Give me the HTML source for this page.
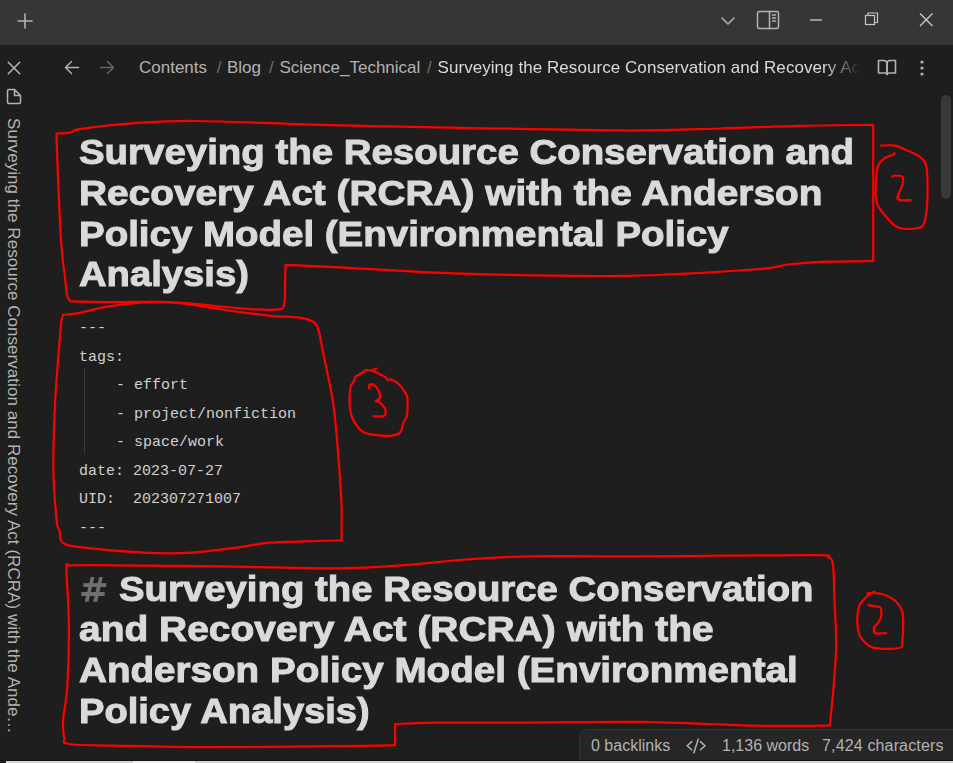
<!DOCTYPE html>
<html><head><meta charset="utf-8">
<style>
html,body{margin:0;padding:0;}
body{width:953px;height:763px;overflow:hidden;position:relative;background:#1e1e1e;font-family:"Liberation Sans",sans-serif;}
.a{position:absolute;}
.t{position:absolute;white-space:pre;transform-origin:0 0;}
.ttl{font-weight:bold;font-size:35.5px;color:#dadada;line-height:40px;-webkit-text-stroke:1px #dadada;}
.fm{font-family:"Liberation Mono",monospace;font-size:15px;color:#d0d0d0;line-height:20px;}
.crumb{font-size:17px;color:#b3b3b3;line-height:20px;}
.sb{font-size:16px;color:#b3b3b3;line-height:20px;}
svg{position:absolute;left:0;top:0;overflow:visible;}
</style></head><body>
<div class="a" style="left:0;top:0;width:953px;height:45px;background:#363636"></div>
<div class="a" style="left:0;top:45px;width:953px;height:1px;background:#1b1b1b"></div>

<svg width="953" height="763" fill="none" stroke-linecap="round" stroke-linejoin="round">
  <path d="M25 14 V28 M18 21 H32" stroke="#b3b3b3" stroke-width="1.6"/>
  <path d="M722 18 L728 24 L734 18" stroke="#b3b3b3" stroke-width="1.5"/>
  <g stroke="#b3b3b3" stroke-width="1.5">
    <rect x="757.5" y="11.5" width="21" height="17" rx="2"/>
    <path d="M769.5 11.5 V28.5 M772.5 15 H775.5 M772.5 18 H775.5 M772.5 21 H775.5"/>
  </g>
  <path d="M810 20 H822" stroke="#c8c8c8" stroke-width="1.3" stroke-linecap="butt"/>
  <g stroke="#c8c8c8" stroke-width="1.2" stroke-linecap="butt" stroke-linejoin="miter">
    <rect x="865.5" y="15.5" width="9" height="9"/>
    <path d="M868 15.5 V13 H877.5 V22.5 H874.5"/>
  </g>
  <path d="M920 13.5 L932.5 26 M932.5 13.5 L920 26" stroke="#c8c8c8" stroke-width="1.4" stroke-linecap="butt"/>
  <path d="M8.3 62.3 L19.7 73.7 M19.7 62.3 L8.3 73.7" stroke="#b3b3b3" stroke-width="1.6"/>
  <path d="M14.5 89.5 H9 a1.5 1.5 0 0 0 -1.5 1.5 V102 a1.5 1.5 0 0 0 1.5 1.5 H19 a1.5 1.5 0 0 0 1.5 -1.5 V95.5 Z M14.5 89.5 V95.5 H20.5" stroke="#b3b3b3" stroke-width="1.5"/>
  <path d="M78.5 67.5 H65.5 M71.5 61.5 L65.5 67.5 L71.5 73.5" stroke="#b3b3b3" stroke-width="1.5"/>
  <path d="M100.5 67.5 H113.5 M107.5 61.5 L113.5 67.5 L107.5 73.5" stroke="#666666" stroke-width="1.5"/>
  <g stroke="#b3b3b3" stroke-width="1.6">
    <path d="M878.5 60.5 H884 a3 3 0 0 1 3 3 V74.5 a2 2 0 0 0 -2 -1.5 H878.5 Z"/>
    <path d="M895.5 60.5 H890 a3 3 0 0 0 -3 3 V74.5 a2 2 0 0 1 2 -1.5 H895.5 Z"/>
  </g>
  <g fill="#b3b3b3">
    <circle cx="922" cy="62" r="1.6"/><circle cx="922" cy="68" r="1.6"/><circle cx="922" cy="74" r="1.6"/>
  </g>
</svg>

<div class="a" style="left:941px;top:95px;width:10px;height:104px;border-radius:5px;background:#393939"></div>

<div class="t crumb" style="left:23px;top:117.5px;transform:rotate(90deg);letter-spacing:0.045px">Surveying the Resource Conservation and Recovery Act (RCRA) with the Ande…</div>

<div class="t crumb" style="left:139px;top:58px;">Contents</div>
<div class="t crumb" style="left:216.7px;top:58px;color:#6e6e6e">/</div>
<div class="t crumb" style="left:227px;top:58px;">Blog</div>
<div class="t crumb" style="left:269px;top:58px;color:#6e6e6e">/</div>
<div class="t crumb" style="left:279.5px;top:58px;">Science_Technical</div>
<div class="t crumb" style="left:427px;top:58px;color:#6e6e6e">/</div>
<div class="t crumb" style="left:437.5px;top:58px;color:#dadada;letter-spacing:0.06px;width:422px;overflow:hidden;-webkit-mask-image:linear-gradient(to right,#000 385px,transparent 422px)">Surveying the Resource Conservation and Recovery Ac</div>

<div class="t ttl" style="left:79px;top:132.3px;transform:scaleX(1.0821)">Surveying the Resource Conservation and</div>
<div class="t ttl" style="left:79px;top:172.9px;transform:scaleX(1.0935)">Recovery Act (RCRA) with the Anderson</div>
<div class="t ttl" style="left:79px;top:213.5px;transform:scaleX(1.0835)">Policy Model (Environmental Policy</div>
<div class="t ttl" style="left:79px;top:254.1px;transform:scaleX(1.0769)">Analysis)</div>

<div class="t fm" style="left:79px;top:318.9px;">---</div>
<div class="t fm" style="left:79px;top:347.5px;">tags:</div>
<div class="a" style="left:84px;top:368px;width:1px;height:86px;background:#3a3a3a"></div>
<div class="t fm" style="left:116px;top:376px;">- effort</div>
<div class="t fm" style="left:116px;top:404.5px;">- project/nonfiction</div>
<div class="t fm" style="left:116px;top:433.1px;">- space/work</div>
<div class="t fm" style="left:79px;top:461.7px;">date: 2023-07-27</div>
<div class="t fm" style="left:79px;top:490.2px;">UID:  202307271007</div>
<div class="t fm" style="left:79px;top:518.8px;">---</div>

<svg width="953" height="763"><g fill="#707070">
  <polygon points="83.4,583.1 106.2,583.1 106.2,587 83.4,587"/>
  <polygon points="81.3,592 104.6,592 104.6,596 81.3,596"/>
  <polygon points="90.7,577.1 94.4,577.1 88.6,601.7 84.7,601.7"/>
  <polygon points="99.1,577.1 102.8,577.1 97.3,601.7 93.1,601.7"/>
</g></svg>
<div class="t ttl" style="left:119px;top:568.5px;transform:scaleX(1.0799)">Surveying the Resource Conservation</div>
<div class="t ttl" style="left:79px;top:609.2px;transform:scaleX(1.0971)">and Recovery Act (RCRA) with the</div>
<div class="t ttl" style="left:79px;top:650px;transform:scaleX(1.0877)">Anderson Policy Model (Environmental</div>
<div class="t ttl" style="left:79px;top:690.7px;transform:scaleX(1.0729)">Policy Analysis)</div>

<div class="a" style="left:579px;top:729px;width:380px;height:40px;background:#262626;border:1px solid #363636;border-radius:8px 0 0 0;"></div>
<div class="t sb" style="left:591px;top:736px;">0 backlinks</div>
<svg width="953" height="763" fill="none"><path d="M691.7 741.6 L687.2 745.7 L691.7 749.8 M700.5 741.6 L705 745.7 L700.5 749.8 M698.2 739.3 L693.9 752.8" stroke="#b3b3b3" stroke-width="1.5" stroke-linecap="round" stroke-linejoin="round"/></svg>
<div class="t sb" style="left:722px;top:736px;">1,136 words</div>
<div class="t sb" style="left:822px;top:736px;letter-spacing:0.15px">7,424 characters</div>

<div class="a" style="left:0;top:760px;width:953px;height:1px;background:#141414"></div>
<div class="a" style="left:0;top:761px;width:953px;height:2px;background:#1e1e1e"></div>
<div class="a" style="left:6px;top:761px;width:947px;height:2px;background:#d6d6d6"></div>
<div class="a" style="left:133px;top:761px;width:62px;height:2px;background:#efefef"></div>

<svg width="953" height="763" fill="none" stroke="#ff0000" stroke-width="2.2" stroke-linecap="round" stroke-linejoin="round">
<path d="M56.4 133.6 C58.7 133.4 65.9 133.5 70.0 132.7 C74.1 131.9 70.3 130.5 81.0 128.9 C91.7 127.3 115.1 124.5 134.4 123.2 C153.7 121.9 164.4 120.7 197.0 121.0 C229.6 121.3 285.8 124.0 330.0 125.1 C374.2 126.2 412.0 126.9 462.0 127.8 C512.0 128.7 587.0 130.4 630.0 130.5 C673.0 130.6 691.7 129.3 720.0 128.5 C748.3 127.7 774.5 126.4 800.0 125.8 C825.5 125.2 861.0 125.0 873.2 124.8 L873.2 124.8 C873.2 135.7 873.2 167.3 873.2 190.0 C873.2 212.7 873.2 249.2 873.2 261.0 L873.2 261.0 C864.6 261.1 835.7 261.2 821.5 261.8 C807.3 262.4 799.2 263.2 788.0 264.5 C776.8 265.8 781.2 267.6 754.0 269.5 C726.8 271.4 673.7 275.1 625.0 275.8 C576.3 276.5 509.5 275.1 462.0 273.7 C414.5 272.3 369.4 268.9 340.0 267.4 C310.6 265.9 294.6 265.3 285.5 264.9 L285.5 264.9 C285.4 268.4 285.1 280.6 285.0 286.0 C284.9 291.4 285.2 294.2 285.0 297.6 C284.8 301.0 284.5 304.4 283.5 306.4 C282.5 308.4 283.8 308.9 279.1 309.4 C274.5 309.9 264.4 309.8 255.6 309.4 C246.8 309.0 236.1 307.9 226.3 307.0 C216.5 306.1 206.7 304.9 196.9 304.1 C187.1 303.3 182.2 302.4 167.5 302.0 C152.8 301.6 124.4 302.1 108.8 302.0 C93.2 301.9 80.5 301.7 74.0 301.4 C67.5 301.1 70.6 300.8 69.5 300.0 C68.4 299.2 68.0 298.3 67.5 296.5 C67.0 294.7 66.7 292.5 66.2 289.0 C65.8 285.5 65.3 279.8 64.8 275.3 C64.3 270.8 63.6 267.9 63.0 262.0 C62.4 256.1 61.7 250.3 61.0 240.0 C60.3 229.7 59.6 213.3 59.0 200.0 C58.4 186.7 57.7 171.1 57.3 160.0 C56.9 148.9 56.5 138.0 56.4 133.6 Z"/>
<path d="M63.2 314.7 C65.9 314.4 71.8 314.3 79.4 312.9 C87.0 311.5 96.6 308.2 108.8 306.4 C121.0 304.6 140.6 302.5 152.8 302.0 C165.0 301.5 172.4 302.5 182.2 303.5 C192.0 304.5 201.8 306.4 211.6 307.9 C221.4 309.4 231.2 311.0 241.0 312.3 C250.8 313.6 260.5 314.9 270.3 315.8 C280.1 316.7 292.4 316.5 299.7 317.6 C307.0 318.7 311.2 320.3 314.4 322.6 C317.6 324.9 317.4 326.6 318.8 331.4 C320.2 336.1 320.4 339.3 322.8 351.1 C325.2 362.9 330.4 385.2 333.0 402.3 C335.6 419.4 336.7 436.3 338.1 453.4 C339.5 470.4 340.9 490.1 341.5 504.6 C342.1 519.1 341.5 534.4 341.5 540.4 L341.5 540.4 C337.5 540.5 329.4 540.6 317.5 541.0 C305.6 541.4 283.4 541.6 270.3 542.6 C257.2 543.6 252.0 545.6 238.9 547.3 C225.8 549.0 207.3 551.8 191.6 552.7 C175.8 553.6 162.8 553.6 144.4 552.7 C126.1 551.8 95.1 549.0 81.5 547.3 C67.9 545.6 66.3 545.5 62.6 542.6 C58.9 539.7 60.4 533.5 59.4 530.0 C58.4 526.5 57.8 531.5 56.8 521.6 C55.8 511.7 53.7 490.4 53.4 470.5 C53.1 450.6 54.0 425.0 55.1 402.3 C56.2 379.6 59.1 348.0 60.2 334.1 C61.3 320.2 61.4 322.0 61.9 318.8 C62.4 315.6 63.0 315.4 63.2 314.7 Z"/>
<path d="M68.3 565.3 C75.8 565.3 89.8 565.1 113.0 565.3 C136.2 565.4 169.6 565.7 207.4 566.2 C245.2 566.7 307.4 568.5 340.0 568.3 C372.6 568.1 382.0 566.7 403.0 565.2 C424.0 563.7 444.9 561.0 465.9 559.5 C486.9 558.0 499.9 556.9 528.9 556.4 C557.9 555.9 607.4 556.5 640.0 556.4 C672.6 556.3 694.6 555.9 724.4 555.7 C754.2 555.5 801.6 554.8 818.9 555.1 C836.2 555.4 825.9 555.6 828.3 557.3 C830.6 559.0 832.0 557.6 833.0 565.2 C834.0 572.8 834.1 589.9 834.6 603.0 C835.1 616.1 836.3 630.8 836.2 643.9 C836.1 657.0 834.8 670.6 834.0 681.6 C833.2 692.6 832.1 702.6 831.4 710.0 C830.7 717.4 830.1 723.1 829.9 725.7 L829.9 725.7 C828.1 725.7 831.2 725.7 818.9 725.7 C806.6 725.7 785.7 726.3 755.9 725.7 C726.1 725.1 677.8 722.4 640.0 721.9 C602.2 721.4 563.2 722.5 528.9 722.6 C494.6 722.7 456.7 722.4 434.4 722.6 C412.1 722.9 401.7 723.9 395.1 724.1 L395.1 724.1 C395.1 727.6 395.1 741.7 395.1 745.2 L395.1 745.2 C385.9 745.4 371.3 745.9 340.0 746.2 C308.7 746.5 245.2 747.3 207.4 747.2 C169.6 747.1 136.1 746.1 113.0 745.6 C89.9 745.1 77.0 745.3 68.9 744.0 C60.8 742.7 65.2 741.9 64.2 737.7 C63.2 733.5 62.7 727.3 63.2 718.9 C63.7 710.5 66.3 703.1 67.3 687.4 C68.2 671.6 69.1 644.1 68.9 624.4 C68.8 604.7 66.5 579.1 66.4 569.3 C66.3 559.4 68.0 566.0 68.3 565.3 Z"/>
<path d="M881.2 145.6 C883.5 145.6 890.5 144.8 894.9 145.6 C899.3 146.4 903.2 148.7 907.4 150.6 C911.5 152.5 916.7 154.4 919.8 156.8 C922.9 159.2 924.7 160.4 926.0 164.9 C927.3 169.4 927.4 176.1 927.5 183.6 C927.6 191.1 927.4 202.8 926.7 209.7 C926.0 216.5 924.9 221.7 923.5 224.7 C922.1 227.7 921.3 227.1 918.6 227.8 C915.9 228.5 910.9 229.1 907.4 229.0 C903.9 228.9 900.3 228.5 897.4 227.2 C894.5 225.9 893.2 224.7 889.9 221.0 C886.6 217.3 879.9 210.0 877.5 204.8 C875.1 199.6 875.6 196.0 875.6 189.8 C875.6 183.6 876.4 172.4 877.5 167.4 C878.6 162.4 880.6 161.8 882.5 159.9 C884.4 158.0 887.0 157.0 888.7 156.2 C890.5 155.4 892.1 155.5 893.0 155.0 C893.9 154.5 894.1 153.4 894.3 153.1"/>
<path d="M892.2 176.7 C892.5 176.6 893.9 175.5 894.9 175.5 C895.9 175.5 901.8 175.8 902.6 176.7 C903.4 177.6 902.9 183.2 902.6 184.8 C902.3 186.4 899.8 190.9 899.3 192.3 C898.8 193.7 897.2 197.7 897.4 198.5 C897.6 199.3 899.8 200.2 901.1 200.4 C902.4 200.6 909.6 200.1 910.5 200.1"/>
<path d="M867.4 593.3 C868.6 593.2 871.9 592.5 874.8 592.8 C877.7 593.1 881.4 593.6 884.9 595.1 C888.4 596.6 893.0 598.8 895.9 601.5 C898.8 604.2 901.1 607.5 902.3 611.6 C903.5 615.7 903.2 621.2 903.2 626.3 C903.2 631.3 902.7 638.4 902.3 641.9 C901.9 645.4 902.7 646.2 900.9 647.4 C899.1 648.5 895.2 648.6 891.3 648.8 C887.4 648.9 881.0 648.7 877.5 648.3 C874.0 647.9 872.8 648.0 870.2 646.5 C867.6 645.0 863.9 641.7 861.9 639.1 C859.9 636.5 859.1 634.6 858.3 630.9 C857.5 627.2 857.1 621.4 857.3 617.1 C857.5 612.8 858.7 608.0 859.6 605.2 C860.5 602.5 861.5 602.1 862.8 600.6 C864.1 599.1 866.2 597.1 867.4 596.0 C868.5 594.9 868.5 594.4 869.7 593.7 C870.9 593.0 873.9 592.2 874.8 591.9"/>
<path d="M868.3 605.2 C869.5 605.4 879.0 606.4 880.3 607.5 C881.6 608.6 881.4 614.7 881.2 616.2 C881.0 617.7 879.1 621.5 878.4 622.6 C877.7 623.7 874.7 626.1 874.3 627.2 C873.9 628.3 873.4 632.6 874.6 633.2 C875.8 633.8 885.0 633.2 886.2 633.2"/>
<path d="M376.2 368.4 C375.4 368.8 372.9 370.3 371.2 370.6 C369.5 370.9 367.7 369.6 366.2 370.0 C364.7 370.4 364.1 371.7 362.3 372.8 C360.5 373.9 357.1 375.1 355.6 376.7 C354.1 378.3 354.2 380.6 353.4 382.3 C352.6 384.0 351.2 383.9 350.6 386.7 C350.0 389.5 349.5 394.7 349.5 399.0 C349.5 403.3 349.8 408.5 350.6 412.4 C351.4 416.3 352.6 419.2 354.5 422.4 C356.4 425.5 359.2 429.2 362.3 431.3 C365.4 433.4 368.8 433.9 373.4 434.7 C378.0 435.4 385.6 436.2 390.1 435.8 C394.6 435.4 398.0 434.6 400.2 432.4 C402.4 430.2 402.4 425.2 403.5 422.4 C404.6 419.6 406.2 419.6 406.9 415.7 C407.5 411.8 407.6 402.7 407.4 399.0 C407.2 395.3 407.1 395.8 405.7 393.4 C404.3 391.0 401.5 386.8 399.1 384.5 C396.7 382.2 393.2 380.2 391.3 379.5 C389.4 378.8 389.0 380.5 387.9 380.0 C386.8 379.5 387.0 378.2 384.6 376.7 C382.2 375.2 375.3 372.0 373.4 371.1"/>
<path d="M369.2 388.4 C369.2 388.0 369.0 384.8 369.5 384.5 C370.0 384.2 373.6 384.4 374.5 385.1 C375.4 385.8 378.4 389.9 379.0 391.2 C379.6 392.5 380.4 396.9 380.1 397.9 C379.8 398.9 375.8 400.8 375.7 401.2 C375.6 401.6 378.1 401.1 379.0 401.8 C379.9 402.5 383.9 406.7 384.6 407.9 C385.3 409.1 385.9 413.2 385.7 414.0 C385.5 414.8 384.1 416.1 382.9 416.3 C381.7 416.5 374.3 416.3 373.4 416.3"/>

</svg>
</body></html>
